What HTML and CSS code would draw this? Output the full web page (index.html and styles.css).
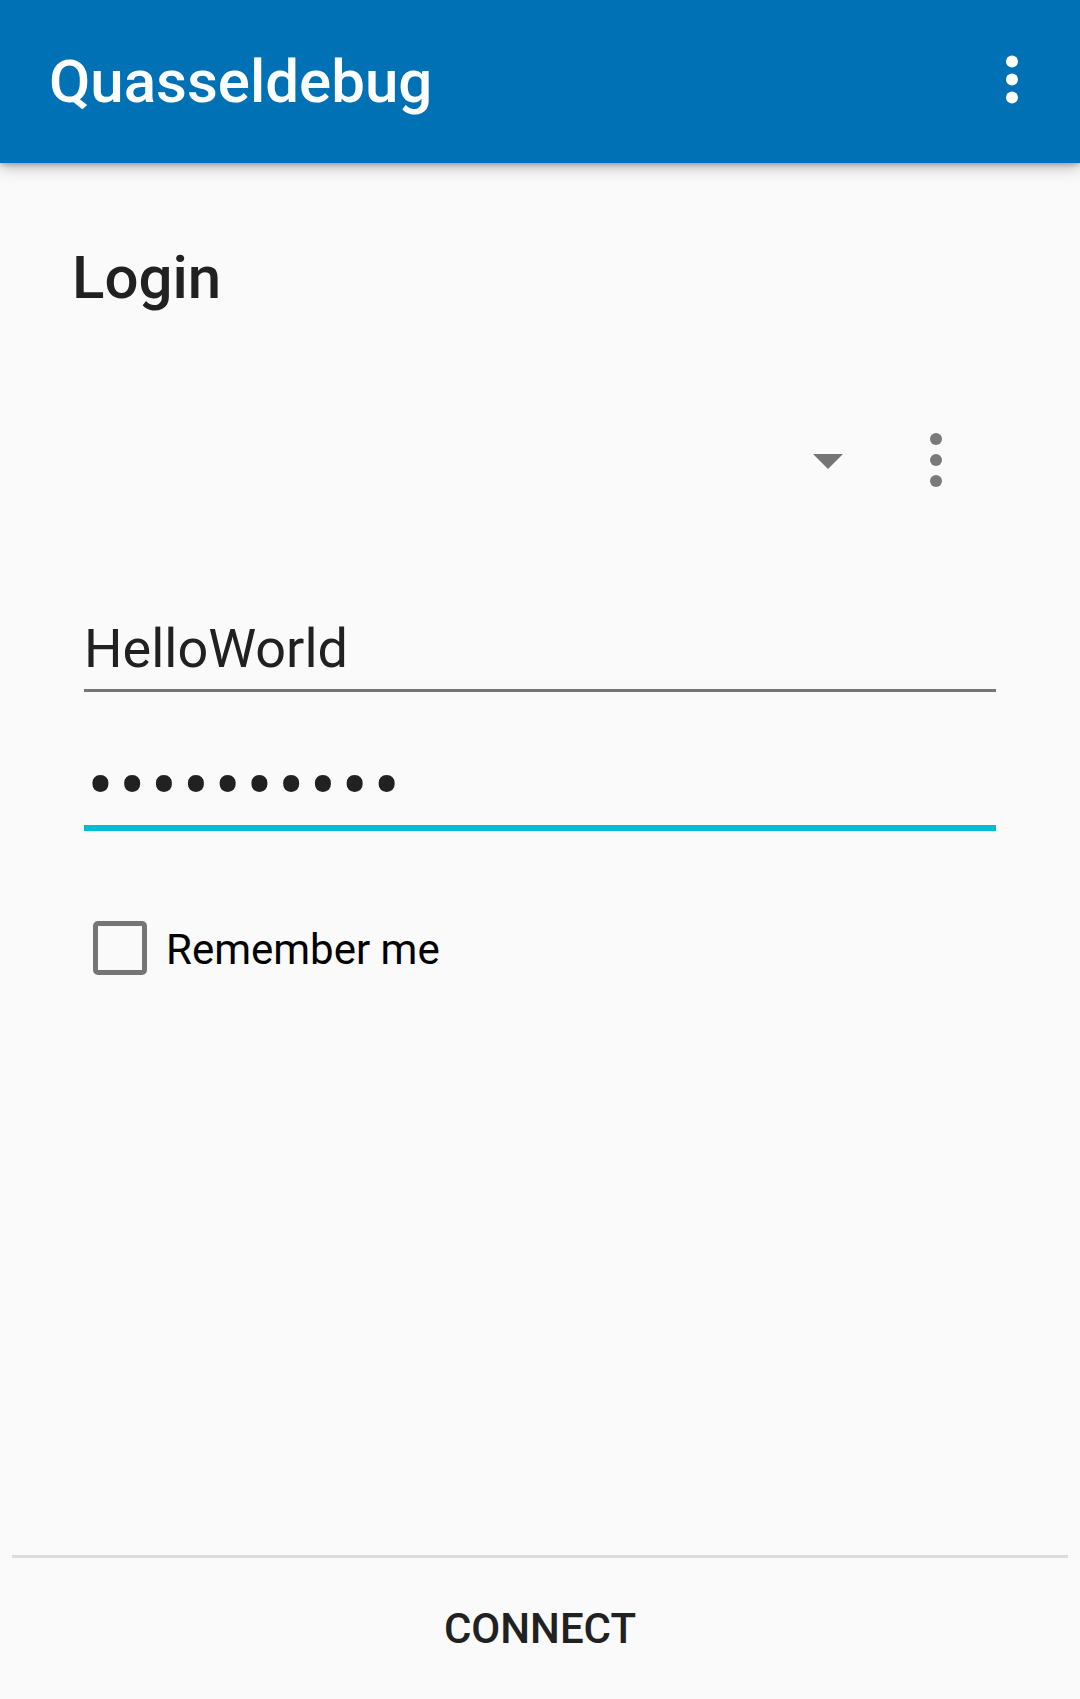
FILE: index.html
```html
<!DOCTYPE html>
<html lang="en">
<head>
<meta charset="utf-8">
<title>Quasseldebug</title>
<link rel="stylesheet" href="styles.css">
</head>
<body>
<div class="app">
  <header class="toolbar">
    <h1 class="toolbar-title">Quasseldebug</h1>
    <svg class="toolbar-menu" width="24" height="60" viewBox="0 0 24 60" aria-label="More options">
      <circle cx="12" cy="9.5" r="6" fill="#ffffff"/>
      <circle cx="12" cy="27.5" r="6" fill="#ffffff"/>
      <circle cx="12" cy="45.5" r="6" fill="#ffffff"/>
    </svg>
  </header>

  <main class="content">
    <h2 class="page-title">Login</h2>

    <div class="account-row">
      <svg class="spinner-arrow" width="30" height="15" viewBox="0 0 30 15">
        <path d="M0 0 L30 0 L15 15 Z" fill="#757575"/>
      </svg>
      <svg class="account-menu" width="12" height="54" viewBox="0 0 12 54">
        <circle cx="6" cy="6" r="6" fill="#7a7a7a"/>
        <circle cx="6" cy="27" r="6" fill="#7a7a7a"/>
        <circle cx="6" cy="48" r="6" fill="#7a7a7a"/>
      </svg>
    </div>

    <div class="field field-user">
      <span class="field-text">HelloWorld</span>
    </div>

    <div class="field field-pass">
      <span class="field-text pass-dots">••••••••••</span>
    </div>

    <label class="check-row">
      <span class="check-box"></span>
      <span class="check-label">Remember me</span>
    </label>
  </main>

  <footer class="footer">
    <div class="divider"></div>
    <div class="connect">CONNECT</div>
  </footer>
</div>
</body>
</html>
```

FILE: styles.css
```css
* {
  box-sizing: border-box;
}

html, body {
  margin: 0;
  padding: 0;
}

body {
  background: #fafafa;
  font-family: Roboto, "Noto Sans", "Liberation Sans", sans-serif;
  color: #212121;
}

.app {
  display: flex;
  flex-direction: column;
  min-height: 1699px;
}

.toolbar {
  position: relative;
  z-index: 2;
  height: 163px;
  background: #0071b5;
  display: flex;
  align-items: center;
  justify-content: space-between;
  padding: 0 56px 0 49px;
  box-shadow: 0 4px 14px rgba(0, 0, 0, 0.28), 0 2px 4px rgba(0, 0, 0, 0.18);
}

.toolbar-title {
  margin: 0;
  font-size: 60px;
  font-weight: 500;
  line-height: 163px;
  color: #ffffff;
}

.toolbar-menu {
  display: block;
}

.content {
  flex: 1;
  display: flex;
  flex-direction: column;
  padding-top: 80px;
}

.page-title {
  margin: 0 0 0 72px;
  font-size: 60px;
  font-weight: 500;
  line-height: 70px;
  color: #212121;
}

.account-row {
  margin-top: 99px;
  height: 96px;
  display: flex;
  align-items: center;
  justify-content: flex-end;
  padding-right: 138px;
  gap: 87px;
}

.spinner-arrow,
.account-menu {
  display: block;
}

.spinner-arrow {
  margin-top: 2px;
}

.field {
  margin: 0 84px;
  padding-bottom: 8px;
}

.field-user {
  margin-top: 109px;
  border-bottom: 3px solid #757575;
}

.field-pass {
  margin-top: 61px;
  border-bottom: 6px solid #00bcd4;
}

.field-text {
  display: block;
  font-size: 54px;
  line-height: 64px;
  color: #212121;
}

.pass-dots {
  font-size: 80px;
  line-height: 64px;
  letter-spacing: 4.8px;
  padding-left: 3px;
  padding-top: 1px;
  margin-bottom: -1px;
}

.check-row {
  display: flex;
  align-items: flex-start;
  margin: 90px 0 0 93px;
  gap: 19px;
}

.check-box {
  width: 54px;
  height: 54px;
  border: 5px solid #757575;
  border-radius: 5px;
}

.check-label {
  font-size: 42px;
  line-height: 54px;
  padding-top: 2px;
  color: #000000;
}

.footer {
  display: flex;
  flex-direction: column;
}

.divider {
  height: 3px;
  margin: 0 12px;
  background: rgba(0, 0, 0, 0.12);
}

.connect {
  height: 141px;
  line-height: 141px;
  text-align: center;
  font-size: 42px;
  font-weight: 500;
  color: #212121;
}
```
